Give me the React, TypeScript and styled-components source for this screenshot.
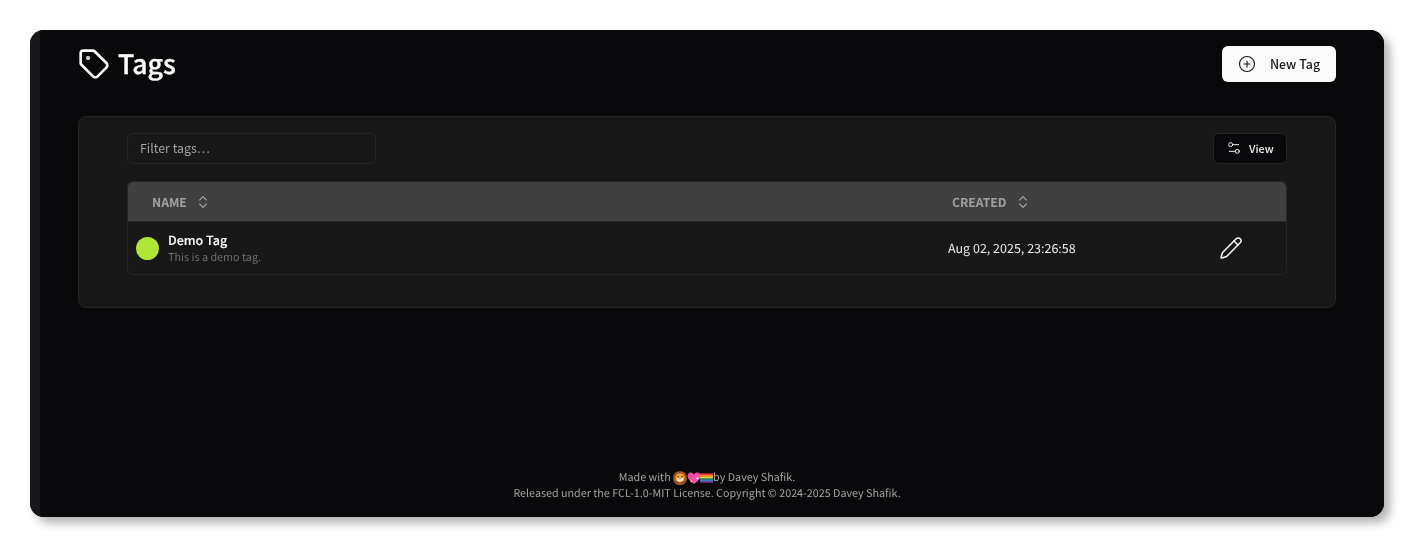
import styled, { createGlobalStyle } from 'styled-components'
import { ChevronsUpDown, CirclePlus, Pencil, Settings2, Tag } from 'lucide-react'

const GlobalStyle = createGlobalStyle`
    * {
        box-sizing: border-box;
    }
    html, body {
        margin: 0;
        background: #fff;
    }
    body {
        font-family: "Noto Sans CJK SC", "Noto Sans", sans-serif;
        text-rendering: geometricPrecision;
    }
    svg {
        flex-shrink: 0;
    }
`

const LionEmoji = () => (
    <svg width="14" height="14" viewBox="0 0 14 14">
        <path d="M7 .2c2 0 3.500.5 4.700 1.500C13.300 3 13.900 5 13.900 7c0 2.300-.6 4.200-2.100 5.400-1.200 1-2.900 1.500-4.800 1.500s-3.600-.5-4.800-1.500C.7 11.200.1 9.300.1 7c0-2 .6-4 2.200-5.300C3.500.7 5 .2 7 .2z" fill="#9c5526" />
        <path d="M7 2.400c2.600 0 4.500 1.600 4.500 4.100S9.600 11.200 7 11.200 2.500 9 2.500 6.500 4.400 2.400 7 2.400z" fill="#f6a93b" />
        <circle cx="5" cy="5.500" r="0.8" fill="#3a2418" />
        <circle cx="9" cy="5.500" r="0.8" fill="#3a2418" />
        <ellipse cx="7" cy="8.600" rx="3.400" ry="1.900" fill="#fbe3c4" />
        <path d="M6 7.400h2L7 8.500z" fill="#3a2418" />
    </svg>
)

const HeartEmoji = () => (
    <svg width="14" height="14" viewBox="0 0 14 13">
        <path d="M7 12.400C3 9.600.6 7.300.6 4.400.6 2.400 2 1 3.800 1 5.100 1 6.300 1.700 7 3c.7-1.300 1.900-2 3.200-2 1.800 0 3.200 1.400 3.200 3.400 0 2.900-2.400 5.200-6.400 8z" fill="#f04fa8" />
        <path d="M10.500 4.500l.6 1.700 1.700.6-1.700.6-.6 1.700-.6-1.700-1.700-.6 1.700-.6z" fill="#ffd9ee" />
        <path d="M4.200 8.300l.4 1 1 .4-1 .4-.4 1-.4-1-1-.4 1-.4z" fill="#ffe680" />
    </svg>
)

const PrideFlagST = styled.svg`
    margin-left: -1px;
    margin-top: -1px;
`

const PrideEmoji = () => (
    <PrideFlagST width="13" height="10" viewBox="0 0 14 10">
        <rect y="0" width="14" height="1.8" fill="#e5383b" />
        <rect y="1.700" width="14" height="1.8" fill="#f58a1f" />
        <rect y="3.300" width="14" height="1.8" fill="#f7d038" />
        <rect y="5" width="14" height="1.8" fill="#3fa34d" />
        <rect y="6.600" width="14" height="1.8" fill="#2d7dd2" />
        <rect y="8.300" width="14" height="1.7" fill="#7b3fa0" />
    </PrideFlagST>
)

const App = () => {
    return (
        <PageST>
            <GlobalStyle />
            <FrameST>
                <SidebarST />
                <MainST>
                    <HeaderST>
                        <TitleST>
                            <Tag size={32} strokeWidth={2} />
                            <h1>Tags</h1>
                        </TitleST>
                        <NewTagButtonST>
                            <CirclePlus size={18} strokeWidth={1.5} />
                            New Tag
                        </NewTagButtonST>
                    </HeaderST>
                    <CardST>
                        <ToolbarST>
                            <FilterInputST placeholder='Filter tags…' />
                            <ViewButtonST>
                                <Settings2 size={16} strokeWidth={1.5} />
                                View
                            </ViewButtonST>
                        </ToolbarST>
                        <TableST>
                            <TableHeadST>
                                <NameHeadST>
                                    NAME <ChevronsUpDown size={16} strokeWidth={1.75} />
                                </NameHeadST>
                                <CreatedHeadST>
                                    CREATED <ChevronsUpDown size={16} strokeWidth={1.75} />
                                </CreatedHeadST>
                            </TableHeadST>
                            <TableRowST>
                                <NameCellST>
                                    <SwatchST $color='#afe635' />
                                    <TagTextST>
                                        <TagNameST>Demo Tag</TagNameST>
                                        <TagDescriptionST>This is a demo tag.</TagDescriptionST>
                                    </TagTextST>
                                </NameCellST>
                                <DateCellST>Aug 02, 2025, 23:26:58</DateCellST>
                                <ActionCellST>
                                    <Pencil size={24} strokeWidth={1.5} />
                                </ActionCellST>
                            </TableRowST>
                        </TableST>
                    </CardST>
                    <FooterST>
                        <FooterLineST>
                            Made with <LionEmoji /><HeartEmoji /><PrideEmoji />by Davey Shafik.
                        </FooterLineST>
                        <FooterLineST>
                            Released under the FCL-1.0-MIT License. Copyright © 2024-2025 Davey Shafik.
                        </FooterLineST>
                    </FooterST>
                </MainST>
            </FrameST>
        </PageST>
    )
}

const PageST = styled.div`
    width: 1426px;
    height: 559px;
    padding: 30px 42px 42px 30px;
    overflow: hidden;
    will-change: opacity;
`

const FrameST = styled.div`
    display: flex;
    height: 100%;
    border-radius: 14px;
    overflow: hidden;
    background: #09090b;
    box-shadow: 6px 6px 10px rgba(0, 0, 0, 0.3);
`

const SidebarST = styled.div`
    width: 10px;
    flex-shrink: 0;
    background: #18181a;
`

const MainST = styled.div`
    flex: 1;
    display: flex;
    flex-direction: column;
    padding: 16px 48px 15px 38px;
    background: #09090b;
`

const HeaderST = styled.div`
    display: flex;
    align-items: center;
    justify-content: space-between;
    height: 36px;
    margin-bottom: 34px;
`

const TitleST = styled.div`
    display: flex;
    align-items: center;
    gap: 8px;
    color: #fafafa;
    h1 {
        margin: -2px 0 0;
        font-size: 26.7px;
        line-height: 36px;
        font-weight: 500;
        -webkit-text-stroke: 0.35px #fafafa;
    }
`

const NewTagButtonST = styled.button`
    display: flex;
    align-items: center;
    gap: 14px;
    width: 114px;
    height: 36px;
    padding: 0 16px 1px;
    border: none;
    border-radius: 6px;
    background: #fafafa;
    color: #18181b;
    font-family: inherit;
    font-size: 12.4px;
    font-weight: 500;
    white-space: nowrap;
`

const CardST = styled.div`
    height: 192px;
    padding: 16px 48px;
    background: #181818;
    border: 1px solid #262626;
    border-radius: 8px;
`

const ToolbarST = styled.div`
    display: flex;
    align-items: center;
    justify-content: space-between;
    height: 31px;
    margin-bottom: 17px;
`

const FilterInputST = styled.input`
    width: 249px;
    height: 31px;
    padding: 0 12px 2px;
    background: transparent;
    border: 1px solid #262626;
    border-radius: 6px;
    color: #fafafa;
    font-family: inherit;
    font-size: 12.4px;
    outline: none;
    &::placeholder {
        color: #a1a1a1;
    }
`

const ViewButtonST = styled.button`
    display: flex;
    align-items: center;
    gap: 7px;
    width: 74px;
    height: 31px;
    padding: 0 12px 1px;
    background: #09090b;
    border: 1px solid #262626;
    border-radius: 6px;
    color: #f0f0f0;
    font-family: inherit;
    font-size: 10.8px;
    font-weight: 500;
    white-space: nowrap;
`

const TableST = styled.div`
    border: 1px solid #262626;
    border-radius: 6px;
    overflow: hidden;
`

const TableHeadST = styled.div`
    display: flex;
    align-items: center;
    height: 40px;
    background: #404040;
    color: #a1a1a1;
    font-size: 12.2px;
    font-weight: 600;
    border-bottom: 1px solid #262626;
`

const NameHeadST = styled.div`
    display: flex;
    align-items: center;
    gap: 8px;
    width: 824px;
    padding-left: 24px;
`

const CreatedHeadST = styled.div`
    display: flex;
    align-items: center;
    gap: 8px;
    margin-top: 1px;
`

const TableRowST = styled.div`
    display: flex;
    align-items: center;
    height: 52px;
    padding-bottom: 1px;
`

const NameCellST = styled.div`
    display: flex;
    align-items: center;
    gap: 9px;
    width: 820px;
    padding-left: 8px;
`

const SwatchST = styled.span<{ $color: string }>`
    width: 23px;
    height: 23px;
    margin-top: 1px;
    border-radius: 50%;
    background: ${({ $color }) => $color};
`

const TagTextST = styled.div`
    padding-top: 2px;
`

const TagNameST = styled.div`
    color: #fafafa;
    font-size: 12.5px;
    font-weight: 500;
    line-height: 17px;
    -webkit-text-stroke: 0.15px #fafafa;
`

const TagDescriptionST = styled.div`
    color: #6f6f75;
    font-size: 10.8px;
    line-height: 19px;
`

const DateCellST = styled.div`
    width: 271px;
    color: #ececec;
    font-size: 12.5px;
`

const ActionCellST = styled.div`
    display: flex;
    color: #fafafa;
`

const FooterST = styled.div`
    margin-top: auto;
    text-align: center;
    color: #a3a3a3;
    font-size: 10.75px;
    line-height: 16px;
`

const FooterLineST = styled.div`
    display: flex;
    align-items: center;
    justify-content: center;
    white-space: pre;
`

export default App
